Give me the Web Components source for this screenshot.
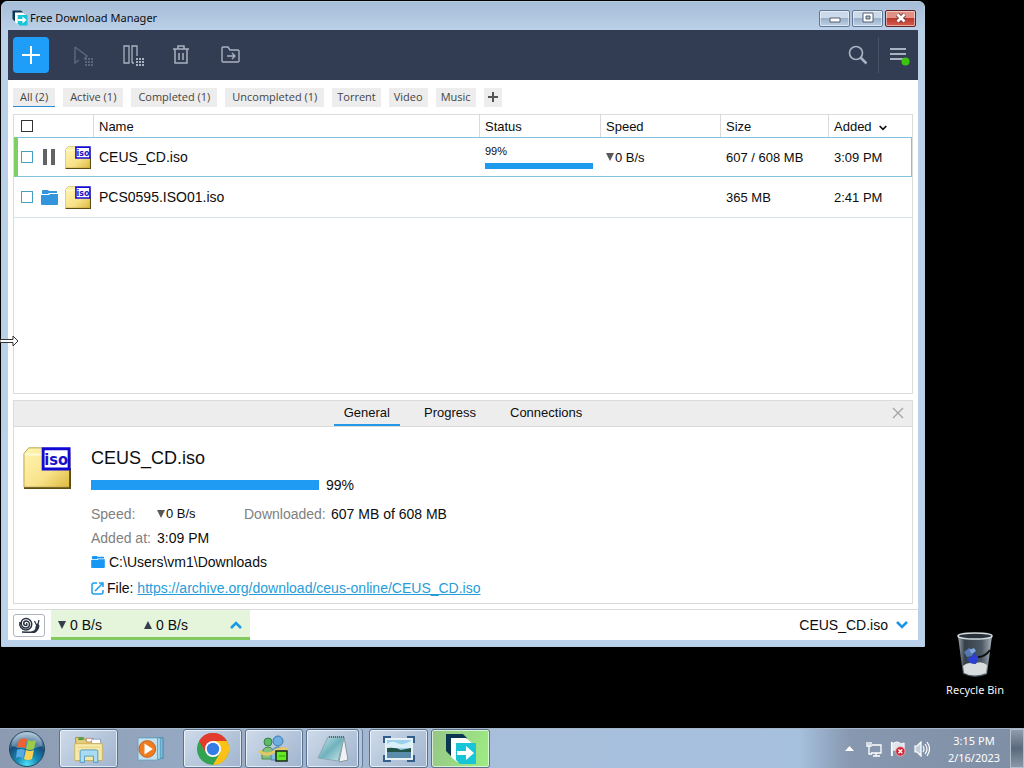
<!DOCTYPE html>
<html lang="en">
<head>
  <meta charset="utf-8">
  <meta name="viewport" content="width=device-width, initial-scale=1">
  <title>Free Download Manager</title>
  <style>
    html, body{
      height: 100%;
    }

    body{
      margin: 0;
      background: hsl(0, 0%, 0%);
      font-family: "Liberation Sans", Arial, sans-serif;
      font-size: 14px;
      color: hsl(0, 0%, 5%);
      overflow: hidden;
    }
  </style>
</head>
<body>
  <desktop-screen>
    <app-window slot="window" heading="Free Download Manager">
      <main-toolbar></main-toolbar>
      <filter-tabs></filter-tabs>
      <download-list></download-list>
      <download-details></download-details>
      <status-bar></status-bar>
    </app-window>
    <desktop-shortcut slot="shortcut">Recycle Bin</desktop-shortcut>
    <task-bar slot="taskbar"></task-bar>
  </desktop-screen>

  <script>
    const icons = {
      logo: `<svg viewBox="0 0 32 32"><path d="M1 1h17l4 4v2H8v16H6L1 18z" fill="#0b3550"/><path d="M6 5h15l7 6v18H12l-6-5z" fill="#fff"/><path d="M11 10h14l6 0v21H15l-4-4z" fill="#18c5d6"/><path d="M7 6h14l3 4H11v16l-4-4z" fill="#fff"/><path d="M12 18h9v-5l8 7-8 7v-5h-9z" fill="#fff"/></svg>`,
      plus: `<svg viewBox="0 0 18 18" fill="none" stroke="#fff" stroke-width="2"><path d="M9 0v18M0 9h18"/></svg>`,
      start: `<svg viewBox="-6 -2 28 24" fill="none" stroke="#5b667c" stroke-width="1.5"><path d="M2 2v16l4-3M2 2l12 9-3 3"/><path d="M12 14h8M12 17h8M12 20h8" stroke-width="2" stroke-dasharray="2 1"/></svg>`,
      pause: `<svg viewBox="-6 -2 28 24" fill="none" stroke="#a9b2c1" stroke-width="1.3"><path d="M1 1h5v17H1zM9 18V1h5v10M9 18h2"/><path d="M13 14h8M13 17h8M13 20h8" stroke-width="2" stroke-dasharray="2 1"/></svg>`,
      trash: `<svg viewBox="0 0 18 20" fill="none" stroke="#a9b2c1" stroke-width="1.5"><path d="M1 4h16M6 4V1h6v3M3 4v14h12V4M7 8v7M11 8v7"/></svg>`,
      move: `<svg viewBox="0 0 20 18" fill="none" stroke="#a9b2c1" stroke-width="1.4"><path d="M1 15V2q0-1 1-1h5l2 3h8q1 0 1 1v10q0 1-1 1H2q-1 0-1-1zM6 10h8M11 7l3 3-3 3"/></svg>`,
      search: `<svg viewBox="0 0 20 20" fill="none" stroke="#a9b2c1"><circle cx="8" cy="8" r="6.5" stroke-width="1.7"/><path d="M12.500 12.500l6 6" stroke-width="2.500"/></svg>`,
      menu: `<svg viewBox="0 0 22 22"><path d="M2 5h16M2 10h16M2 15h16" stroke="#a9b2c1" stroke-width="2"/><circle cx="17.500" cy="17.500" r="4" fill="#3cc50f"/></svg>`,
      iso: `<svg viewBox="0 0 50 44"><defs><linearGradient id="y" x2="1" y2="1"><stop offset="0" stop-color="#fff6b4"/><stop offset=".6" stop-color="#f8e289"/><stop offset="1" stop-color="#dcb83d"/></linearGradient></defs><path d="M1 42V7l5-6h14l4 5h25v36z" fill="url(#y)" stroke="#b9a14c"/><path d="M2 8h40" stroke="#fffbd8" stroke-width="2"/><path d="M1 43h48V22" fill="none" stroke="#5f4d12" stroke-width="2"/><path d="M21 2h27v21H21z" fill="#fff" stroke="#1208d4" stroke-width="3"/><text x="34.500" y="19" text-anchor="middle" font-family="DejaVu Sans Condensed, sans-serif" font-weight="700" font-size="17" fill="#1a10c8">iso</text></svg>`,
      bars: `<svg viewBox="0 0 12 16"><path d="M0 0h4v16H0zM8 0h4v16H8z" fill="#636363"/></svg>`,
      folder: `<svg viewBox="0 0 17 15"><path d="M1 1q0-1 1-1h5l1 1h8v2H8L7 4H1z" fill="currentColor"/><path d="M0 5h8l1-1h8v10q0 1-1 1H1q-1 0-1-1z" fill="currentColor"/></svg>`,
      down: `<svg viewBox="0 0 8 8"><path d="M0 0h8L4 8z" fill="currentColor"/></svg>`,
      up: `<svg viewBox="0 0 8 8"><path d="M0 8h8L4 0z" fill="currentColor"/></svg>`,
      reveal: `<svg viewBox="0 0 9 5"><path d="M0 5h9L4.500 0z" fill="#fff"/></svg>`,
      chevron: `<svg viewBox="0 0 12 8" fill="none" stroke="currentColor" stroke-width="2.500"><path d="M1 1l5 5 5-5"/></svg>`,
      chevronUp: `<svg viewBox="0 0 12 8" fill="none" stroke="currentColor" stroke-width="2.500"><path d="M1 7l5-5 5 5"/></svg>`,
      cross: `<svg viewBox="0 0 12 12" fill="none" stroke="#a2a2a2" stroke-width="1.2"><path d="M1 1l10 10M11 1L1 11"/></svg>`,
      external: `<svg viewBox="0 0 13 13" fill="none" stroke="#1c9df0" stroke-width="1.5"><path d="M6 1H3Q1 1 1 3v7q0 2 2 2h7q2 0 2-2V8M4 9l8-8M8 1h4v4"/></svg>`,
      snail: `<svg viewBox="0 0 22 16" fill="none" stroke="#26323f"><path d="M8 6.500a1 1 0 0 1 0 2a2.250 2.250 0 0 1 0-4.500a3.500 3.500 0 0 1 0 7a4.750 4.750 0 0 1 0-9.500a5.750 5.750 0 0 1 0 11.500a6.250 6.250 0 0 1-6-8" stroke-width="1.500"/><path d="M4 15h9q5-1 5-5l1-3q2 0 2 2-1 6-6 7z" fill="#26323f"/><path d="M18.500 8l-2-4M20 7l1-4" stroke-width="1.200"/></svg>`,
      orb: `<svg viewBox="0 0 38 38"><defs><radialGradient id="o" cx=".5" cy=".95" r=".9"><stop offset="0" stop-color="#4fe3f5"/><stop offset=".35" stop-color="#1689b5"/><stop offset=".7" stop-color="#164f7c"/><stop offset="1" stop-color="#8eafc8"/></radialGradient></defs><circle cx="19" cy="19" r="17.500" fill="url(#o)" stroke="#29465f"/><path d="M4 16a15 14 0 0 1 30 0q-14 5-30 0z" fill="#fff" opacity=".28"/><path d="M11 10q4-3 8-1l-2 9q-4-2-8 0z" fill="#ef6032"/><path d="M20 10q4 2 8 0l-2 9q-4 2-8 0z" fill="#9bcc47"/><path d="M9 20q4-2 8 0l-2 8q-4-2-7 0z" fill="#58a9e4"/><path d="M18 20q4 2 8 0l-2 9q-4 2-8 0z" fill="#fbd154"/></svg>`,
      explorer: `<svg viewBox="0 0 36 32"><path d="M3 29V3h9l2 3h17v23z" fill="#e8cf75" stroke="#a68d42"/><path d="M6 3h6v3H6z" fill="#48a24b"/><path d="M15 4h8v4h-8z" fill="#fff" stroke="#b65b3a" stroke-width=".7"/><path d="M21 5h10v5H21z" fill="#fff" stroke="#6288ba" stroke-width=".7"/><path d="M2 10h31v19H2z" fill="#f7e9a8" stroke="#c9b05c"/><path d="M5 14h25M5 18h25" stroke="#e6d180"/><path d="M8 31V19q0-2 2-2h16q2 0 2 2v12h-5v-7H13v7z" fill="#a7dcf3" stroke="#4c94bd"/></svg>`,
      media: `<svg viewBox="0 0 30 28"><path d="M6 2h22v22H6z" fill="#79bdde" stroke="#4383a8"/><path d="M3 2h22v23H3z" fill="#a5d7ee" stroke="#5699ba"/><path d="M1 2h21v24H1z" fill="#c1e1ef" stroke="#6c9dba"/><circle cx="11" cy="14" r="9" fill="#ef7d20" stroke="#c65a10"/><path d="M8 8v12l9-6z" fill="#fff"/></svg>`,
      chrome: `<svg viewBox="0 0 32 32"><circle cx="16" cy="16" r="16" fill="#32a350"/><path d="M2.100 8A16 16 0 0 1 29.900 8L16 8.500 9 20z" fill="#e33b2e"/><path d="M29.900 8A16 16 0 0 1 16 32l7-12-7-12z" fill="#fbc116"/><circle cx="16" cy="16" r="8" fill="#fff"/><circle cx="16" cy="16" r="6.200" fill="#337de4"/></svg>`,
      people: `<svg viewBox="0 0 32 28"><circle cx="10" cy="7" r="4" fill="#5dbb66" stroke="#328344"/><path d="M4 24q-1-12 6-12t6 12z" fill="#82c17d" stroke="#488c4b"/><circle cx="20" cy="6" r="5" fill="#6eafdf" stroke="#397aaf"/><path d="M13 25q-1-13 7-13t7 13z" fill="#87bbe3" stroke="#4b83b7"/><path d="M1 16q6 5 13 2 9-7 16-3" fill="none" stroke="#e5c768" stroke-width="3"/><path d="M18 16h11v10H18z" fill="#63e823" stroke="#172915" stroke-width="1.5"/><path d="M21 21h6" stroke="#2fa40d"/></svg>`,
      notepad: `<svg viewBox="0 0 32 30"><defs><linearGradient id="n" x2="1" y2="1"><stop offset="0" stop-color="#cfe9ec"/><stop offset=".5" stop-color="#6fb2bd"/><stop offset="1" stop-color="#d1edf0"/></linearGradient></defs><path d="M27 3l4 23-9 2z" fill="#eef2f5" stroke="#8b979e"/><path d="M11 3h16l-6 24L1 24z" fill="url(#n)" stroke="#8ca9b2"/><path d="M12 3h15" stroke="#666" stroke-width="2" stroke-dasharray="1 1"/></svg>`,
      photo: `<svg viewBox="0 0 32 26"><path d="M1 7V1h7M24 1h7v6M31 19v6h-7M8 25H1v-6" fill="#4a75a7" stroke="#335d8b" stroke-width="2"/><path d="M3 3h26v20H3z" fill="#9bd1ec" stroke="#e8f1f5" stroke-width="2"/><path d="M4 8q5-4 10-1t14-2v7H4z" fill="#d9f0f8"/><path d="M4 12q9-1 14 2l10-2v5H4z" fill="#235347"/><path d="M4 16h24v6H4z" fill="#5b8cab"/></svg>`,
      network: `<svg viewBox="0 0 16 16" fill="none" stroke="#fff" stroke-width="1.300"><path d="M6 4h9v8H5M7 15h7M10 12v3M1 1v4h4V1M3 5v8h3M3 1v3"/></svg>`,
      flag: `<svg viewBox="0 0 17 17"><path d="M2 1v15" stroke="#fff" stroke-width="2"/><path d="M4 2q4-2 6 0t5 0v8q-3 2-5 0t-6 0z" fill="#dce5ed" stroke="#fff"/><circle cx="11" cy="11" r="5" fill="#cf2535" stroke="#edb0b0"/><path d="M9 9l4 4M13 9l-4 4" stroke="#fff" stroke-width="1.5"/></svg>`,
      sound: `<svg viewBox="0 0 16 16" fill="none" stroke="#fff" stroke-width="1.2"><path d="M1 5h2l4-4v14l-4-4H1z" fill="#c3cedb"/><path d="M9 5q2 3 0 6M11 3q4 5 0 10M13 1q5 7 0 14"/></svg>`,
      bin: `<svg viewBox="0 0 38 46"><defs><linearGradient id="b"><stop offset="0" stop-color="#9aa5ad"/><stop offset=".2" stop-color="#343f49"/><stop offset=".7" stop-color="#4c5964"/><stop offset="1" stop-color="#a9b2b8"/></linearGradient></defs><path d="M2 4l5 38q12 6 24 0l5-38z" fill="url(#b)"/><path d="M7 34q5-5 11-2 7-4 13 1l-1 8q-12 5-22 0z" fill="#d9dcdd"/><path d="M8 20l5-4 5 3-2 5-5 1z" fill="#5378b3"/><path d="M11 26l5-1 2-4 4 4-2 7-6-1z" fill="#2b3fd4"/><path d="M13 18l5-2 2 3-4 3z" fill="#80a7dc"/><path d="M22 25q7 0 12-7" stroke="#0b0e13" stroke-width="2" fill="none"/><ellipse cx="19" cy="4" rx="17" ry="3" fill="#29323a" stroke="#d2dbe0" stroke-width="1.5"/></svg>`,
      cursor: `<svg viewBox="0 0 19 12"><path d="M0 4.500h13V1l5 5-5 5V7.500H0z" fill="#fff" stroke="#333"/></svg>`,
      minimize: `<svg viewBox="0 0 12 12"><path d="M1 6h10v4H1z" fill="#fff" stroke="#555f70"/></svg>`,
      maximize: `<svg viewBox="0 0 12 12"><path d="M1 1h10v9H1z" fill="#fff" stroke="#555f70"/><path d="M4 4h4v3H4z" fill="#a6b9ce" stroke="#555f70"/></svg>`,
      close: `<svg viewBox="0 0 12 12"><path d="M2.500 2.500l7 7M9.500 2.500l-7 7" stroke="#6b3034" stroke-width="4.500"/><path d="M2.500 2.500l7 7M9.500 2.500l-7 7" stroke="#fff" stroke-width="2.800"/></svg>`
    }

    class AppIcon extends HTMLElement {

      constructor () {
        super()
        this.shadow = this.attachShadow({ mode: 'open' })
      }

      connectedCallback () {
        this.render()
      }

      render () {
        this.shadow.innerHTML =
        /*html*/`
        <style>

          :host{
            display: inline-block;
            flex: none;
            width: 16px;
            height: 16px;
          }

          svg{
            display: block;
            width: 100%;
            height: 100%;
          }

        </style>

        ${icons[this.getAttribute('name')]}
        `
      }
    }

    customElements.define('app-icon', AppIcon);

    class DesktopScreen extends HTMLElement {

      constructor () {
        super()
        this.shadow = this.attachShadow({ mode: 'open' })
      }

      connectedCallback () {
        this.render()
      }

      render () {
        this.shadow.innerHTML =
        /*html*/`
        <style>

          :host{
            display: flex;
            flex-direction: column;
            height: 100%;
          }

          .desktop{
            flex: 1;
            min-height: 0;
            position: relative;
          }

          ::slotted(app-window){
            position: absolute;
            inset: 1px 99px 81px 1px;
          }

          ::slotted(desktop-shortcut){
            position: absolute;
            right: 20px;
            bottom: 30px;
          }

          .cursor{
            position: absolute;
            left: 0;
            top: 335px;
            width: 19px;
            height: 12px;
          }

        </style>

        <div class="desktop">
          <slot name="window"></slot>
          <slot name="shortcut"></slot>
          <app-icon class="cursor" name="cursor"></app-icon>
        </div>
        <slot name="taskbar"></slot>
        `
      }
    }

    customElements.define('desktop-screen', DesktopScreen);

    class DesktopShortcut extends HTMLElement {

      constructor () {
        super()
        this.shadow = this.attachShadow({ mode: 'open' })
      }

      connectedCallback () {
        this.render()
      }

      render () {
        this.shadow.innerHTML =
        /*html*/`
        <style>

          :host{
            display: block;
          }

          button{
            display: flex;
            flex-direction: column;
            align-items: center;
            gap: 4px;
            padding: 0;
            border: 0;
            background: none;
            color: hsl(0, 0%, 96%);
            font: 11px/16px "Noto Sans", sans-serif;
          }

          app-icon{
            width: 38px;
            height: 46px;
          }

        </style>

        <button>
          <app-icon name="bin"></app-icon>
          <slot></slot>
        </button>
        `
      }
    }

    customElements.define('desktop-shortcut', DesktopShortcut);

    class AppWindow extends HTMLElement {

      constructor () {
        super()
        this.shadow = this.attachShadow({ mode: 'open' })
      }

      connectedCallback () {
        this.render()
      }

      render () {
        this.shadow.innerHTML =
        /*html*/`
        <style>

          :host{
            display: flex;
            flex-direction: column;
            box-sizing: border-box;
            padding: 0 6px 6px;
            border: 1px solid hsl(205, 45%, 80%);
            border-radius: 6px 6px 0 0;
            background: linear-gradient(hsl(212, 38%, 75%), hsl(212, 50%, 82%) 28px, hsl(212, 55%, 83%));
          }

          header{
            display: flex;
            align-items: center;
            gap: 2px;
            height: 28px;
            padding: 4px 2px 0 4px;
            box-sizing: border-box;
          }

          h1{
            flex: 1;
            margin: 0;
            font: 11px/16px "Noto Sans", sans-serif;
          }

          header button{
            display: flex;
            align-items: center;
            justify-content: center;
            width: 31px;
            height: 17px;
            padding: 0;
            border: 1px solid hsl(214, 20%, 48%);
            border-radius: 2px;
            background: linear-gradient(hsl(212, 45%, 86%) 50%, hsl(212, 30%, 70%) 50%, hsl(212, 45%, 82%));
            box-shadow: inset 0 0 0 1px hsla(0, 0%, 100%, 0.5);
          }

          header .close{
            border-color: hsl(355, 50%, 26%);
            background: linear-gradient(hsl(8, 60%, 70%) 50%, hsl(4, 60%, 46%) 50%, hsl(8, 60%, 56%));
          }

          header button app-icon{
            width: 12px;
            height: 12px;
          }

          .client{
            display: flex;
            flex-direction: column;
            flex: 1;
            min-height: 0;
            background: hsl(0, 0%, 100%);
          }

        </style>

        <header>
          <app-icon name="logo"></app-icon>
          <h1>${this.getAttribute('heading')}</h1>
          <button aria-label="Minimize"><app-icon name="minimize"></app-icon></button>
          <button aria-label="Maximize"><app-icon name="maximize"></app-icon></button>
          <button class="close" aria-label="Close"><app-icon name="close"></app-icon></button>
        </header>
        <main class="client">
          <slot></slot>
        </main>
        `
      }
    }

    customElements.define('app-window', AppWindow);

    class MainToolbar extends HTMLElement {

      constructor () {
        super()
        this.shadow = this.attachShadow({ mode: 'open' })
      }

      connectedCallback () {
        this.render()
      }

      render () {
        this.shadow.innerHTML =
        /*html*/`
        <style>

          :host{
            display: flex;
            align-items: center;
            height: 50px;
            padding: 0 0 0 5px;
            background: hsl(221, 25%, 26%);
          }

          button{
            display: flex;
            align-items: center;
            justify-content: center;
            width: 36px;
            height: 36px;
            padding: 0;
            border: 0;
            background: none;
          }

          .actions{
            display: flex;
            flex: 1;
            gap: 14px;
          }

          .add{
            border-radius: 4px;
            background: hsl(205, 95%, 55%);
          }

          .add app-icon{
            width: 18px;
            height: 18px;
          }

          .batch app-icon{
            width: 28px;
            height: 24px;
          }

          .trash app-icon{
            width: 18px;
            height: 20px;
          }

          .move app-icon{
            width: 20px;
            height: 18px;
          }

          .side{
            width: 40px;
          }

          .side app-icon{
            width: 20px;
            height: 20px;
          }

          .menu{
            border-left: 1px solid hsl(221, 18%, 34%);
          }

          .menu app-icon{
            width: 22px;
            height: 22px;
          }

        </style>

        <div class="actions">
          <button class="add" aria-label="Add download"><app-icon name="plus"></app-icon></button>
          <button class="batch" aria-label="Start all"><app-icon name="start"></app-icon></button>
          <button class="batch" aria-label="Pause all"><app-icon name="pause"></app-icon></button>
          <button class="trash" aria-label="Delete"><app-icon name="trash"></app-icon></button>
          <button class="move" aria-label="Move"><app-icon name="move"></app-icon></button>
        </div>
        <button class="side" aria-label="Search"><app-icon name="search"></app-icon></button>
        <button class="side menu" aria-label="Menu"><app-icon name="menu"></app-icon></button>
        `
      }
    }

    customElements.define('main-toolbar', MainToolbar);

    class FilterTabs extends HTMLElement {

      constructor () {
        super()
        this.shadow = this.attachShadow({ mode: 'open' })
        this.states = ['All (2)', 'Active (1)', 'Completed (1)', 'Uncompleted (1)']
        this.tags = ['Torrent', 'Video', 'Music']
      }

      connectedCallback () {
        this.render()
      }

      render () {
        this.shadow.innerHTML =
        /*html*/`
        <style>

          :host{
            display: flex;
            align-items: center;
            gap: 8px;
            height: 34px;
            padding: 0 5px;
          }

          button{
            height: 19px;
            padding: 0 7px;
            border: 0;
            border-bottom: 1px solid transparent;
            background: hsl(0, 0%, 93%);
            color: hsl(0, 0%, 27%);
            font: 11px/18px "Open Sans", sans-serif;
          }

          .selected{
            border-bottom-color: hsl(205, 65%, 50%);
          }

          .tag{
            padding: 0 5px;
          }

          .new{
            display: flex;
            align-items: center;
            justify-content: center;
            width: 18px;
            padding: 0;
          }

          .new svg{
            width: 10px;
            height: 10px;
          }

        </style>

        ${this.states.map((label, index) => `<button class="${index === 0 ? 'selected' : ''}">${label}</button>`).join('')}
        ${this.tags.map(label => `<button class="tag">${label}</button>`).join('')}
        <button class="new" aria-label="New tag">
          <svg viewBox="0 0 10 10"><path d="M5 0v10M0 5h10" stroke="#555" stroke-width="2"/></svg>
        </button>
        `
      }
    }

    customElements.define('filter-tabs', FilterTabs);

    class DownloadList extends HTMLElement {

      constructor () {
        super()
        this.shadow = this.attachShadow({ mode: 'open' })
        this.data = []
      }

      connectedCallback () {
        this.loadData()
        this.render()
      }

      loadData () {
        this.data = [
          { name: 'CEUS_CD.iso', icon: 'bars', percent: '99%', speed: '0 B/s', size: '607 / 608 MB', added: '3:09 PM', selected: true },
          { name: 'PCS0595.ISO01.iso', icon: 'folder', size: '365 MB', added: '2:41 PM' }
        ]
      }

      renderRow (item) {
        return /*html*/`
        <tr class="${item.selected ? 'selected' : ''}">
          <td>
            <div class="marks">
              <input type="checkbox" aria-label="${item.name}">
              <span class="state"><app-icon class="${item.icon}" name="${item.icon}"></app-icon></span>
              <app-icon class="iso" name="iso"></app-icon>
            </div>
          </td>
          <td class="name">${item.name}</td>
          <td>${item.percent ? `<div class="percent">${item.percent}</div><div class="progress"></div>` : ''}</td>
          <td>${item.speed ? `<span class="speed"><app-icon class="arrow" name="down"></app-icon>${item.speed}</span>` : ''}</td>
          <td>${item.size}</td>
          <td>${item.added}</td>
        </tr>
        `
      }

      render () {
        this.shadow.innerHTML =
        /*html*/`
        <style>

          :host{
            display: block;
            flex: 1;
            min-height: 0;
            margin: 0 5px 6px;
            border: 1px solid hsl(0, 0%, 86%);
            overflow: hidden;
            font-size: 13px;
          }

          table{
            width: 100%;
            table-layout: fixed;
            border-collapse: separate;
            border-spacing: 0;
          }

          th, td{
            box-sizing: border-box;
            padding: 0 5px;
            text-align: left;
            font-weight: 400;
            white-space: nowrap;
          }

          th{
            height: 22px;
            border-right: 1px solid hsl(0, 0%, 85%);
          }

          th:last-child{
            border-right: 0;
          }

          .marks-column{
            width: 80px;
          }

          .wide-column{
            width: 121px;
          }

          .speed-column{
            width: 120px;
          }

          .size-column{
            width: 108px;
          }

          .added-column{
            width: 83px;
          }

          td{
            height: 41px;
            border-bottom: 1px solid hsl(200, 35%, 88%);
          }

          .selected td{
            height: 40px;
            border-top: 1px solid hsl(200, 60%, 70%);
            border-bottom-color: hsl(200, 60%, 70%);
          }

          .selected td:first-child{
            border-left: 4px solid hsl(105, 55%, 60%);
          }

          .selected td:last-child{
            border-right: 1px solid hsl(200, 60%, 70%);
          }

          th:first-child, td:first-child{
            padding: 0 0 0 7px;
          }

          .selected td:first-child{
            padding-left: 3px;
          }

          .name{
            font-size: 14px;
          }

          .marks{
            display: flex;
            align-items: center;
            gap: 7px;
          }

          input{
            appearance: none;
            display: block;
            flex: none;
            box-sizing: border-box;
            width: 12px;
            height: 12px;
            margin: 0;
            border: 1px solid hsl(197, 50%, 52%);
          }

          th input{
            border-color: hsl(0, 0%, 20%);
          }

          .state{
            display: flex;
            justify-content: center;
            width: 18px;
          }

          .bars{
            width: 12px;
          }

          .folder{
            width: 17px;
            height: 15px;
            color: hsl(205, 70%, 53%);
          }

          .iso{
            width: 26px;
            height: 23px;
          }

          .percent{
            font-size: 11px;
            line-height: 13px;
          }

          .progress{
            height: 6px;
            margin: 5px 3px 0 0;
            background: hsl(204, 85%, 52%);
          }

          .speed{
            display: flex;
            align-items: center;
            gap: 1px;
          }

          .arrow{
            width: 8px;
            height: 8px;
            color: hsl(0, 0%, 35%);
          }

          .sort{
            width: 8px;
            height: 6px;
            margin-left: 7px;
          }

        </style>

        <table>
          <thead>
            <tr>
              <th class="marks-column"><input type="checkbox" aria-label="Select all"></th>
              <th>Name</th>
              <th class="wide-column">Status</th>
              <th class="speed-column">Speed</th>
              <th class="size-column">Size</th>
              <th class="added-column">Added<app-icon class="sort" name="chevron"></app-icon></th>
            </tr>
          </thead>
          <tbody>
            ${this.data.map(item => this.renderRow(item)).join('')}
          </tbody>
        </table>
        `
      }
    }

    customElements.define('download-list', DownloadList);

    class DownloadDetails extends HTMLElement {

      constructor () {
        super()
        this.shadow = this.attachShadow({ mode: 'open' })
      }

      connectedCallback () {
        this.render()
      }

      render () {
        this.shadow.innerHTML =
        /*html*/`
        <style>

          :host{
            display: block;
            margin: 0 5px 5px;
            border: 1px solid hsl(0, 0%, 86%);
          }

          nav{
            display: grid;
            grid-template-columns: 1fr auto 1fr;
            box-sizing: border-box;
            height: 26px;
            background: hsl(0, 0%, 93%);
            border-bottom: 1px solid hsl(0, 0%, 86%);
          }

          .tabs{
            display: flex;
            grid-column: 2;
            gap: 14px;
          }

          button{
            padding: 0 10px;
            border: 0;
            border-bottom: 2px solid transparent;
            background: none;
            color: inherit;
            font: inherit;
            font-size: 13px;
          }

          .selected{
            border-bottom-color: hsl(204, 80%, 52%);
          }

          .dismiss{
            justify-self: end;
            padding: 0 8px;
          }

          .dismiss app-icon{
            display: block;
            width: 12px;
            height: 12px;
          }

          .body{
            display: flex;
            gap: 20px;
            padding: 19px 9px 3px;
          }

          .iso{
            width: 48px;
            height: 44px;
          }

          h2{
            margin: 0 0 7px;
            font-size: 18px;
            font-weight: 400;
            line-height: 24px;
          }

          .total{
            display: flex;
            align-items: center;
            gap: 7px;
            margin-bottom: 9px;
            line-height: 16px;
          }

          .progress{
            width: 228px;
            height: 10px;
            background: hsl(205, 90%, 54%);
          }

          dl{
            display: grid;
            grid-template-columns: 66px 87px 87px auto;
            margin: 0;
            line-height: 24px;
          }

          dt{
            color: hsl(0, 0%, 50%);
            white-space: nowrap;
          }

          dd{
            display: flex;
            align-items: center;
            margin: 0;
            white-space: nowrap;
          }

          .speed{
            gap: 1px;
            font-size: 13px;
          }

          .speed app-icon{
            width: 8px;
            height: 8px;
            color: hsl(0, 0%, 35%);
          }

          .line{
            display: flex;
            align-items: center;
            gap: 4px;
            line-height: 24px;
          }

          .folder{
            width: 14px;
            height: 12px;
            color: hsl(205, 90%, 52%);
          }

          .source{
            gap: 3px;
            margin-top: 2px;
          }

          .external{
            width: 13px;
            height: 13px;
          }

          a{
            color: hsl(200, 70%, 50%);
          }

        </style>

        <nav>
          <div class="tabs">
            <button class="selected">General</button>
            <button>Progress</button>
            <button>Connections</button>
          </div>
          <button class="dismiss" aria-label="Close details"><app-icon name="cross"></app-icon></button>
        </nav>
        <section class="body">
          <app-icon class="iso" name="iso"></app-icon>
          <div>
            <h2>CEUS_CD.iso</h2>
            <div class="total"><div class="progress"></div>99%</div>
            <dl>
              <dt>Speed:</dt>
              <dd class="speed"><app-icon name="down"></app-icon>0 B/s</dd>
              <dt>Downloaded:</dt>
              <dd>607 MB of 608 MB</dd>
              <dt>Added at:</dt>
              <dd>3:09 PM</dd>
            </dl>
            <div class="line"><app-icon class="folder" name="folder"></app-icon>C:\\Users\\vm1\\Downloads</div>
            <div class="line source">
              <app-icon class="external" name="external"></app-icon>
              <span>File: <a href="https://archive.org/download/ceus-online/CEUS_CD.iso">https://archive.org/download/ceus-online/CEUS_CD.iso</a></span>
            </div>
          </div>
        </section>
        `
      }
    }

    customElements.define('download-details', DownloadDetails);

    class StatusBar extends HTMLElement {

      constructor () {
        super()
        this.shadow = this.attachShadow({ mode: 'open' })
      }

      connectedCallback () {
        this.render()
      }

      render () {
        this.shadow.innerHTML =
        /*html*/`
        <style>

          :host{
            display: flex;
            align-items: center;
            gap: 6px;
            height: 30px;
            padding: 0 10px 0 5px;
            border-top: 1px solid hsl(0, 0%, 86%);
          }

          button{
            display: flex;
            align-items: center;
            padding: 0;
            border: 0;
            background: none;
            color: inherit;
            font: inherit;
          }

          .snail{
            justify-content: center;
            width: 32px;
            height: 23px;
            border: 1px solid hsl(215, 12%, 72%);
            border-radius: 3px;
          }

          .snail app-icon{
            width: 22px;
          }

          .speeds{
            align-self: stretch;
            width: 199px;
            box-sizing: border-box;
            padding: 2px 8px 0 7px;
            border-bottom: 3px solid hsl(100, 50%, 58%);
            background: hsl(100, 55%, 91%);
          }

          .speed{
            display: flex;
            align-items: center;
            gap: 4px;
            width: 87px;
          }

          .speed app-icon{
            width: 8px;
            height: 8px;
            color: hsl(215, 15%, 25%);
          }

          .chevron{
            width: 12px;
            height: 8px;
            margin-left: auto;
            color: hsl(203, 80%, 50%);
          }

          .current{
            gap: 8px;
            margin-left: auto;
          }

        </style>

        <button class="snail" aria-label="Snail mode"><app-icon name="snail"></app-icon></button>
        <button class="speeds">
          <span class="speed"><app-icon name="down"></app-icon>0 B/s</span>
          <span class="speed"><app-icon name="up"></app-icon>0 B/s</span>
          <app-icon class="chevron" name="chevronUp"></app-icon>
        </button>
        <button class="current">CEUS_CD.iso<app-icon class="chevron" name="chevron"></app-icon></button>
        `
      }
    }

    customElements.define('status-bar', StatusBar);

    class TaskBar extends HTMLElement {

      constructor () {
        super()
        this.shadow = this.attachShadow({ mode: 'open' })
        this.apps = [
          { icon: 'explorer', label: 'Explorer', type: 'open' },
          { icon: 'media', label: 'Media Player', type: '' },
          { icon: 'chrome', label: 'Chrome', type: 'open' },
          { icon: 'people', label: 'Messenger', type: 'open narrow' },
          { icon: 'notepad', label: 'Notepad', type: 'open narrow stacked' },
          { icon: 'photo', label: 'Photos', type: 'open' },
          { icon: 'logo', label: 'Free Download Manager', type: 'open active' }
        ]
      }

      connectedCallback () {
        this.render()
      }

      render () {
        this.shadow.innerHTML =
        /*html*/`
        <style>

          :host{
            display: flex;
            align-items: stretch;
            height: 39px;
            border-top: 1px solid hsl(213, 25%, 72%);
            background: linear-gradient(90deg, hsl(216, 19%, 62%), hsl(214, 28%, 68%) 20%, hsl(213, 42%, 76%) 48%, hsl(212, 46%, 76%) 78%, hsl(216, 20%, 61%) 83%, hsl(214, 18%, 57%));
            color: hsl(0, 0%, 100%);
            font: 11px/17px "Noto Sans", sans-serif;
          }

          button{
            display: flex;
            align-items: center;
            justify-content: center;
            box-sizing: border-box;
            padding: 0;
            border: 1px solid transparent;
            background: none;
            color: inherit;
          }

          .start{
            width: 54px;
          }

          .start app-icon{
            width: 38px;
            height: 38px;
          }

          .apps{
            display: flex;
            flex: 1;
            gap: 3px;
            padding-left: 5px;
          }

          .app{
            width: 59px;
            border-radius: 3px;
          }

          .app app-icon{
            width: 32px;
            height: 32px;
          }

          .app .media{
            width: 28px;
            height: 26px;
          }

          .open{
            border-color: hsl(214, 22%, 46%);
            background: linear-gradient(135deg, hsl(212, 40%, 86%), hsl(214, 32%, 72%));
            box-shadow: inset 0 0 0 1px hsla(0, 0%, 100%, 0.65);
          }

          .active{
            background: linear-gradient(110deg, hsl(105, 35%, 65%), hsl(105, 75%, 72%));
          }

          .narrow{
            width: 58px;
          }

          .stacked{
            width: 53px;
            margin-right: 7px;
            box-shadow: inset 0 0 0 1px hsla(0, 0%, 100%, 0.65), 3px 0 0 hsl(214, 32%, 78%), 4px 0 0 hsl(214, 22%, 50%);
          }

          .tray{
            display: flex;
            align-items: center;
            gap: 8px;
          }

          .tray .reveal{
            width: 9px;
            height: 5px;
            margin-right: 4px;
          }

          time{
            display: block;
            width: 64px;
            margin: 0 4px;
            text-align: center;
          }

          .peek{
            width: 14px;
            border: 1px solid hsl(214, 20%, 75%);
            background: linear-gradient(hsl(214, 14%, 62%), hsl(214, 16%, 42%) 50%, hsl(214, 14%, 60%));
          }

        </style>

        <button class="start" aria-label="Start"><app-icon name="orb"></app-icon></button>
        <div class="apps">
          ${this.apps.map(app => `<button class="app ${app.type}" aria-label="${app.label}"><app-icon class="${app.icon}" name="${app.icon}"></app-icon></button>`).join('')}
        </div>
        <div class="tray">
          <app-icon class="reveal" name="reveal"></app-icon>
          <app-icon name="network"></app-icon>
          <app-icon name="flag"></app-icon>
          <app-icon name="sound"></app-icon>
          <time>3:15 PM<br>2/16/2023</time>
        </div>
        <button class="peek" aria-label="Show desktop"></button>
        `
      }
    }

    customElements.define('task-bar', TaskBar);
  </script>
</body>
</html>
